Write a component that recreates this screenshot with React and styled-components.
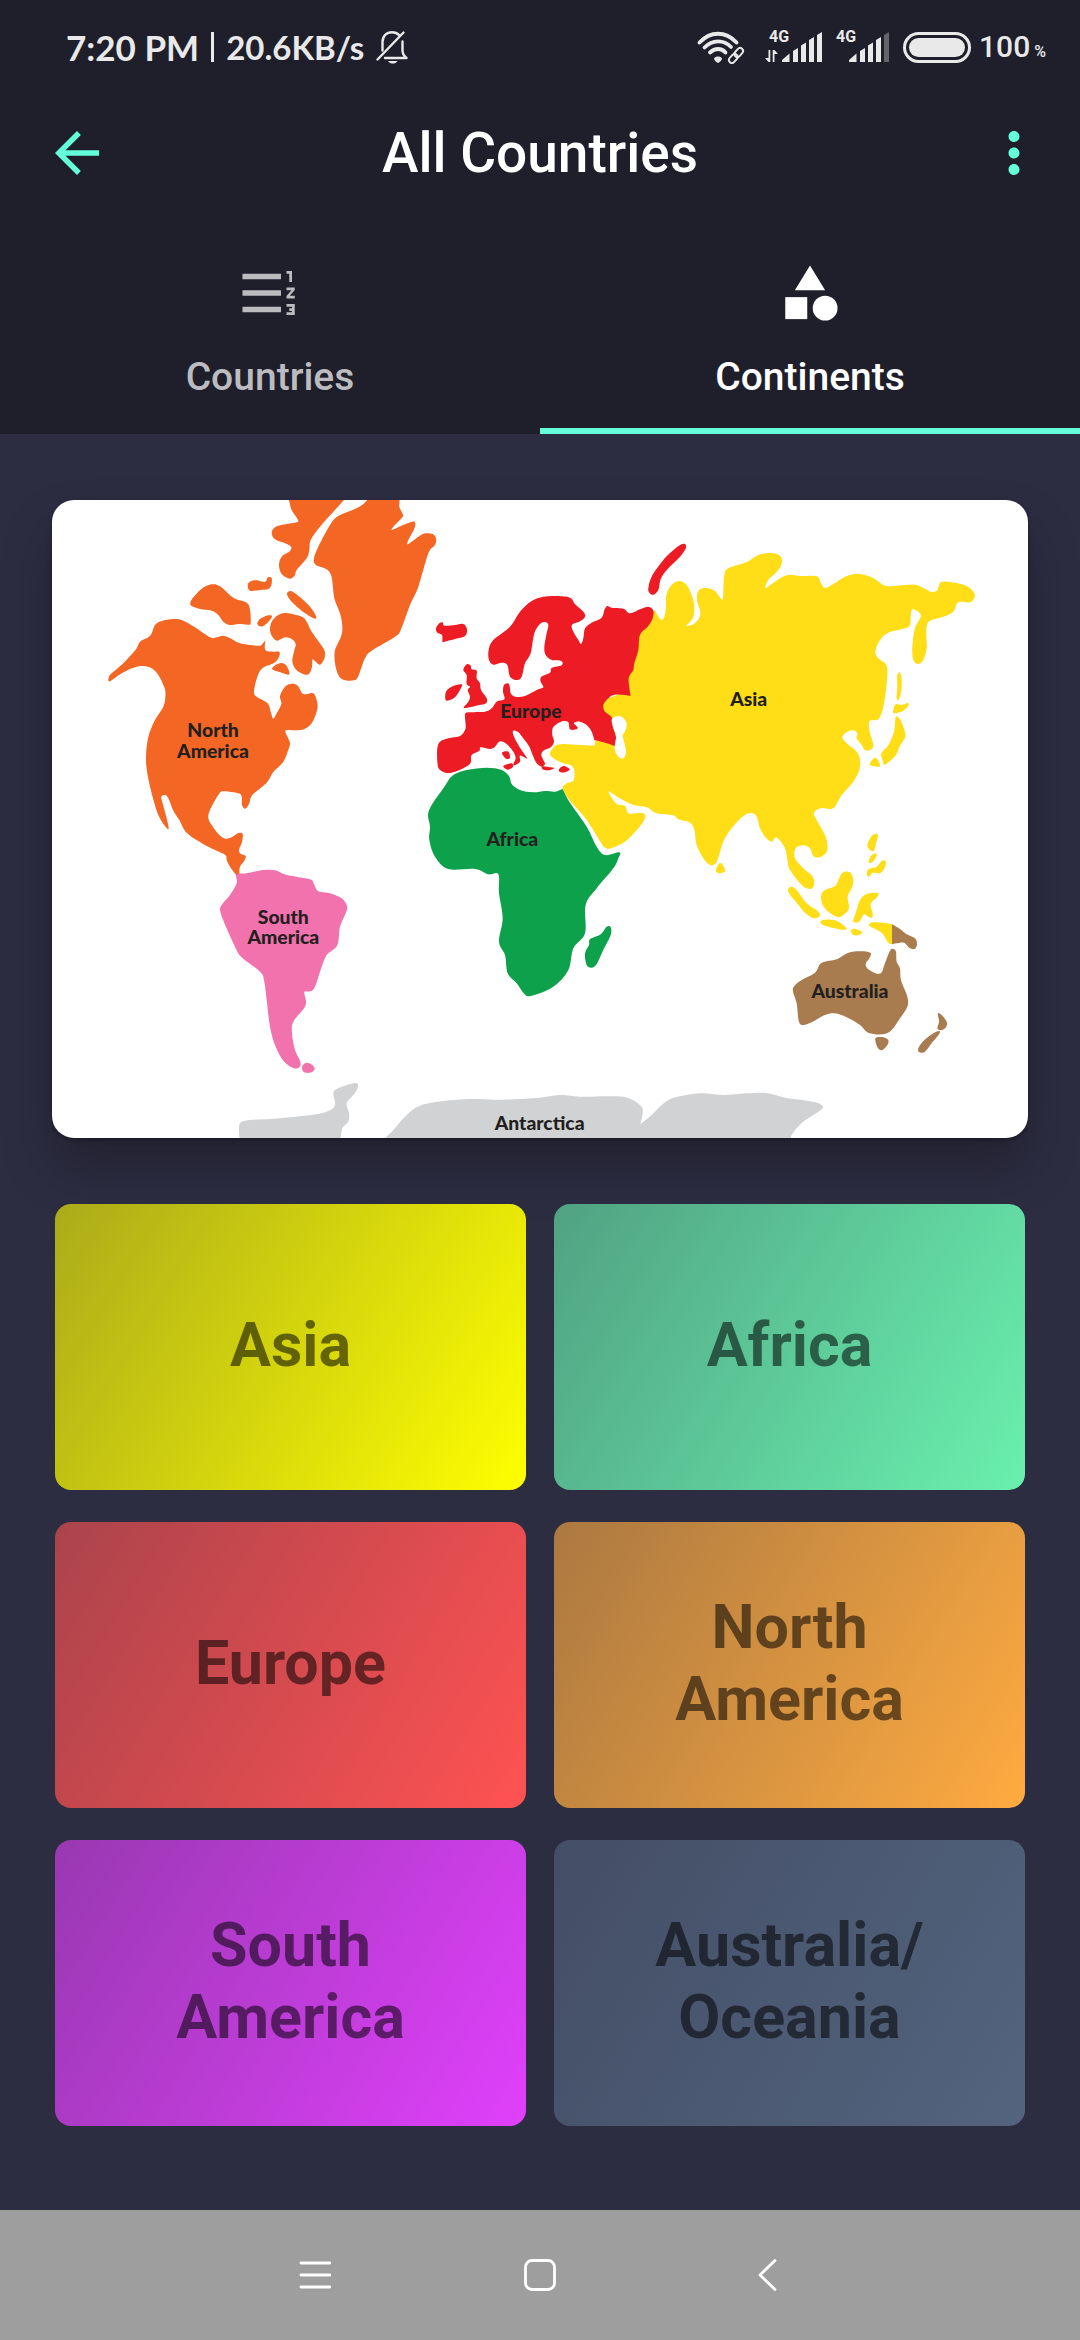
import React from "react";
import styled, { createGlobalStyle } from "styled-components";
import { MdArrowBack, MdMoreVert, MdFormatListNumberedRtl, MdCategory } from "react-icons/md";

const GlobalStyle = createGlobalStyle`
  *, *::before, *::after { box-sizing: border-box; }
  body { margin: 0; background: #2d2d42; font-family: Roboto, "Noto Sans", sans-serif; }
  button { border: 0; padding: 0; margin: 0; background: none; font: inherit; color: inherit; cursor: pointer; }
  svg { display: block; }
`;

const Screen = styled.div`
  min-height: 100vh;
  display: flex;
  flex-direction: column;
`;

/* ---------- header ---------- */

const Header = styled.header`
  background: #1f1e2b;
  color: #fff;
`;

const StatusBar = styled.div`
  height: 76px;
  padding: 18px 34px 0 66px;
  display: flex;
  justify-content: space-between;
  align-items: center;
  color: #e9e9ea;
`;

const StatusGroup = styled.div`
  display: flex;
  align-items: center;
  gap: ${(p) => p.$gap}px;
`;

const StatusText = styled.span`
  font-family: Lato, sans-serif;
  font-weight: 700;
  font-size: ${(p) => p.$size}px;
  line-height: 40px;
  white-space: pre;
`;

const Rule = styled.span`
  width: 3px;
  height: 30px;
  background: currentColor;
`;

const Charge = styled.span`
  display: flex;
  align-items: baseline;
  gap: 4px;
  font-weight: 500;
  font-size: 30px;
  line-height: 40px;
`;

const Percent = styled.span`
  font-size: 16px;
  line-height: 20px;
`;

const AppBar = styled.div`
  height: 154px;
  display: grid;
  grid-template-columns: 1fr auto 1fr;
  align-items: center;
`;

const Title = styled.h1`
  margin: 0;
  font-size: 55px;
  line-height: 66px;
  font-weight: 500;
`;

const BarButton = styled.button`
  width: ${(p) => p.$width}px;
  height: 154px;
  display: grid;
  place-items: center;
  color: #64ffda;
  justify-self: ${(p) => p.$side};
`;

const Tabs = styled.div`
  display: grid;
  grid-template-columns: 1fr 1fr;
`;

const Tab = styled.button`
  display: flex;
  flex-direction: column;
  align-items: center;
  gap: 28px;
  padding: 30px 0 28px;
  border-bottom: 6px solid ${(p) => (p.$active ? "#64ffda" : "transparent")};
  color: ${(p) => (p.$active ? "#fff" : "#bcbcc0")};
  font-size: 39px;
  line-height: 46px;
  font-weight: 500;
`;

/* ---------- content ---------- */

const Content = styled.main`
  flex: 1;
  display: flex;
  flex-direction: column;
  gap: 66px;
  padding: 66px 0 84px;
`;

const MapCard = styled.figure`
  margin: 0 52px;
  border-radius: 22px;
  overflow: hidden;
  background: #fff;
  box-shadow: 0 30px 50px rgba(0, 0, 0, 0.25), 0 2px 4px rgba(0, 0, 0, 0.3);

  svg { width: 100%; height: auto; }
  text {
    font-family: Lato, sans-serif;
    font-weight: 900;
    font-size: 58px;
    text-anchor: middle;
    fill: #231f20;
  }
`;

const Grid = styled.div`
  display: grid;
  grid-template-columns: 1fr 1fr;
  gap: 32px 28px;
  padding: 0 55px;
`;

const Tile = styled.button`
  min-height: 286px;
  padding: 0 88px 4px;
  border-radius: 16px;
  background: linear-gradient(121deg, ${(p) => p.$color}99, ${(p) => p.$color});
  color: rgba(0, 0, 0, 0.54);
  font-size: 61px;
  line-height: 72px;
  font-weight: 700;
`;

/* ---------- system navigation ---------- */

const SystemNav = styled.nav`
  height: 130px;
  display: flex;
  justify-content: center;
  background: #9e9e9e;
`;

const NavButton = styled.button`
  width: 225px;
  display: grid;
  place-items: center;
`;

/* ---------- map drawing ---------- */

// Turns a list of "x,y" points into a closed smooth curve.
// A point written twice makes a sharp corner.
function smooth(list) {
  const p = list.trim().split(/\s+/).map((s) => s.split(",").map(Number));
  const n = p.length;
  let d = `M${p[0][0]} ${p[0][1]}`;
  for (let i = 0; i < n; i++) {
    const a = p[(i + n - 1) % n];
    const b = p[i];
    const c = p[(i + 1) % n];
    const e = p[(i + 2) % n];
    if (b[0] === c[0] && b[1] === c[1]) continue;
    const x1 = b[0] + (c[0] - a[0]) / 6;
    const y1 = b[1] + (c[1] - a[1]) / 6;
    const x2 = c[0] - (e[0] - b[0]) / 6;
    const y2 = c[1] - (e[1] - b[1]) / 6;
    d += `C${x1.toFixed(1)} ${y1.toFixed(1)} ${x2.toFixed(1)} ${y2.toFixed(1)} ${c[0]} ${c[1]}`;
  }
  return d + "Z";
}

const NORTH_AMERICA = [
  "205,570 207,560 215,550 245,524 262,507 288,478 300,455 325,442 335,430 345,405 365,393 400,387 430,392 465,412 510,442 530,442 550,437 575,447 600,460 650,467 664,465 676,451 676,451 676,480 700,485 718,486 717,500 703,518 668,534 652,560 642,605 650,620 683,640 692,665 700,686 710,670 724,642 720,618 735,590 755,581 773,587 790,612 820,610 832,640 830,665 815,700 795,716 770,721 740,720 737,728 749,755 748,770 730,815 700,846 680,878 637,915 628,940 616,956 606,945 605,920 595,910 550,904 535,915 510,960 505,985 515,1005 535,1032 555,1046 575,1042 595,1029 608,1032 606,1055 597,1080 603,1092 617,1098 613,1112 600,1130 597,1156 590,1156 570,1130 560,1110 556,1095 520,1078 475,1053 437,1025 418,990 400,962 385,925 375,915 364,920 368,940 380,985 386,1015 378,1012 355,975 335,910 322,850 318,800 325,740 345,690 370,650 376,620 374,595 355,555 335,535 310,528 280,533 245,550 212,573",
  "451,338 460,322 485,296 515,283 540,289 580,323 620,338 630,360 632,398 625,404 595,402 570,405 550,395 535,375 515,362 480,357 455,348",
  "623,285 632,274 650,271 675,276 684,262 695,265 694,285 685,297 660,300 630,302",
  "652,400 660,387 680,377 696,378 688,392 670,408 657,408",
  "742,308 755,304 780,322 810,350 828,378 826,386 815,382 785,362 755,335 743,318",
  "690,420 695,395 715,375 740,369 785,380 800,395 815,425 850,475 855,495 850,512 840,524 830,518 818,508 816,530 808,550 795,554 770,541 757,515 762,485 767,462 755,447 735,442 712,452 697,440",
  "697,538 707,525 725,519 740,528 748,553 725,548",
  "745,10 747,30 755,60 773,88 770,97 725,105 705,112 695,128 705,148 735,160 753,170 750,183 725,200 717,225 725,252 750,266 765,255 770,240 800,205 808,180 812,150 840,110 880,65 910,32 925,10",
  "1000,10 980,32 955,52 895,78 870,105 835,170 822,205 827,224 860,238 875,262 883,325 900,370 907,410 903,440 885,480 885,520 895,555 912,570 942,571 955,558 975,505 995,482 1065,440 1082,420 1110,345 1135,290 1165,190 1185,165 1188,145 1178,132 1155,130 1135,140 1105,162 1103,155 1122,118 1126,100 1117,95 1090,105 1057,119 1060,110 1088,80 1086,68 1078,50 1079,30 1080,10",
];

const ASIA = [
  "42,272 50,282 63,299 73,290 78,260 78,230 90,200 115,183 140,195 158,235 163,265 158,295 137,319 137,319 160,313 177,295 181,275 173,250 171,225 180,208 200,204 225,213 247,239 250,210 253,165 265,145 320,126 355,105 395,99 420,107 426,125 415,150 385,180 376,205 395,192 440,166 480,168 530,169 543,190 555,204 580,192 620,168 655,162 695,172 735,197 770,197 825,194 850,204 875,216 892,210 902,187 930,186 975,196 1000,215 1004,230 990,247 955,247 940,275 910,290 870,302 860,320 859,350 860,385 850,420 835,432 820,420 817,380 825,325 842,290 835,275 817,268 812,290 810,315 795,325 745,338 720,360 706,395 715,415 740,438 740,490 730,560 715,598 690,602 688,630 700,675 690,690 675,690 665,675 650,655 652,640 640,631 620,637 607,652 620,670 650,695 660,720 658,750 640,785 605,825 580,865 545,864 522,878 530,900 555,945 562,975 560,995 540,1012 520,1008 510,985 490,976 467,985 465,1015 490,1045 518,1070 522,1095 510,1107 485,1095 450,1050 442,1020 435,985 410,952 395,965 375,950 360,925 350,890 335,879 310,888 275,925 250,965 230,1025 210,1035 190,1015 170,975 163,930 150,908 115,898 100,886 50,880 20,862 -20,855 -60,835 -95,812 -95,812 -90,825 -70,852 -45,858 -35,880 -15,880 10,880 15,895 -5,925 -45,965 -95,987 -110,980 -160,900 -210,842 -232,807 -220,790 -200,782 -197,755 -205,737 -230,730 -260,715 -270,700 -255,678 -230,672 -180,675 -137,677 -137,677 -130,650 -115,600 -120,550 -40,510 -35,470 -15,410 -10,350 20,310",
  "228,1050 238,1030 248,1035 256,1052 245,1059 232,1058",
  "772,465 780,458 785,480 784,510 777,538 770,535 772,500",
  "762,580 760,570 767,553 785,555 803,549 805,556 790,572",
  "767,592 778,595 790,620 796,650 778,680 768,705 735,734 728,720 724,700 745,675 762,635",
  "690,735 695,722 707,713 718,728 718,740",
];

const EAST_INDIES = [
  "502,195 515,168 528,161 534,168 528,190 522,212 510,210",
  "506,246 512,228 528,220 528,232 515,248",
  "501,285 505,268 530,260 545,243 557,243 555,262 540,280 518,278 508,290",
  "264,328 275,320 290,330 320,370 355,395 358,410 338,414 312,395 290,368 270,345",
  "363,350 372,332 405,318 415,300 428,278 450,277 460,300 455,325 443,350 447,385 430,405 412,411 385,395 368,375",
  "361,425 375,419 405,421 425,432 440,446 425,449 375,437",
  "453,452 465,446 486,456 478,465 460,465",
  "460,420 470,390 480,360 500,342 533,339 532,350 512,372 518,400 516,413 505,410 492,403 478,425 462,427",
  "507,433 520,427 550,428 577,433 577,433 577,493 577,493 565,488 545,458 512,440",
];

const EUROPE = [
  "112,775 120,755 145,745 180,738 195,720 197,705 195,675 205,667 255,665 275,655 290,635 313,628 309,605 312,585 325,580 330,595 332,610 345,620 375,618 410,600 430,592 422,575 424,560 450,548 455,534 485,526 484,513 455,510 437,495 433,470 440,430 445,405 435,396 420,402 403,430 392,490 375,520 365,560 350,570 330,560 322,525 305,518 280,524 267,510 266,480 280,450 330,410 360,365 395,333 430,320 470,318 510,323 525,342 550,365 555,380 540,394 516,405 520,425 535,450 543,462 550,445 555,415 575,398 605,383 613,360 622,348 635,353 670,356 690,370 720,358 745,350 760,362 758,385 745,408 720,435 715,480 703,520 700,540 687,560 687,585 692,618 692,618 645,614 625,625 610,645 615,665 635,682 640,715 648,740 645,768 645,768 615,758 583,750 583,750 575,725 560,705 540,695 522,699 533,712 528,718 510,718 505,697 490,693 470,702 458,715 457,735 462,755 452,772 430,782 424,795 430,810 435,822 425,830 410,820 398,795 388,770 372,748 355,727 340,722 340,735 355,765 375,795 381,806 360,797 360,815 345,826 340,822 347,805 340,785 320,762 300,754 285,770 270,777 242,772 238,782 215,795 212,818 195,832 165,845 140,849 118,838 112,815",
  "108,415 118,400 128,397 133,407 165,405 190,402 201,418 195,438 165,447 127,457 127,457 126,435 112,428",
  "190,540 200,523 212,527 215,538 230,542 230,565 240,580 243,600 260,625 258,640 235,646 192,654 205,635 210,620 203,600 210,590 200,582 200,555",
  "137,630 138,605 155,590 185,583 180,600 165,622 150,630",
  "745,295 755,260 790,210 830,172 852,161 858,173 840,200 805,235 783,265 775,300 760,314 748,308",
  "306,788 325,785 330,803 318,806",
  "310,828 335,820 338,832 322,839",
  "426,829 440,830 463,834 445,841 428,838",
  "477,838 490,828 509,838 495,847 480,846",
];

const CASPIAN_SEA =
  "635,690 645,680 665,680 680,700 675,725 668,735 672,755 678,785 672,803 660,804 648,790 644,770 648,740 640,715";

const AFRICA = [
  "157,857 200,840 260,833 305,840 328,860 335,882 360,900 400,907 435,903 465,905 488,897 488,897 508,935 560,1010 590,1070 615,1095 658,1087 655,1105 640,1135 590,1195 557,1245 555,1330 520,1375 505,1440 460,1490 395,1517 373,1512 350,1480 323,1450 315,1395 297,1355 308,1285 297,1210 295,1153 265,1153 225,1137 145,1137 105,1100 88,1050 90,1010 84,975 95,945 130,895",
  "632,1312 632,1335 610,1380 590,1422 575,1433 560,1425 555,1390 567,1365 570,1348 602,1333 620,1310",
];

const SOUTH_AMERICA = [
  "170,163 200,160 250,150 285,151 320,165 390,178 402,193 415,214 450,220 485,235 501,258 497,280 480,320 475,365 465,385 440,405 425,440 405,500 390,514 373,516 378,545 372,565 340,605 336,640 345,690 361,725 358,742 340,744 310,722 285,675 270,620 260,540 252,480 240,455 185,412 165,380 140,325 121,275 125,255 150,225 170,190",
  "366,742 375,730 392,731 404,745 395,757 372,757",
];

const ANTARCTICA = [
  "180,970 180,970 177,925 185,905 220,899 280,896 400,884 445,873 465,855 460,820 475,805 525,789 534,800 520,825 500,850 507,880 505,905 487,925 480,970 480,970",
  "600,970 600,970 620,950 640,930 680,885 720,857 790,843 870,837 950,839 1060,835 1140,825 1200,830 1300,829 1350,836 1387,865 1381,913 1381,913 1415,885 1470,838 1560,820 1630,825 1700,820 1760,819 1820,834 1900,845 1928,858 1920,872 1870,905 1835,945 1835,970 1835,970",
];

const AUSTRALIA = [
  "279,635 283,618 305,600 345,578 360,553 380,544 410,538 445,518 485,514 512,519 508,535 497,552 505,568 530,581 545,577 553,555 570,512 580,507 588,515 590,545 600,565 603,600 622,650 622,680 600,715 575,750 548,763 505,758 480,735 440,712 405,700 375,705 335,727 308,735 296,722 290,670",
  "526,775 545,771 563,778 564,792 547,810 533,803",
  "714,700 728,708 741,728 735,745 722,751 712,745 717,725",
  "655,805 670,783 700,760 718,753 717,763 695,790 675,815 658,817",
  "576,433 576,433 600,447 620,463 645,475 651,492 645,506 630,505 612,488 590,490 576,493 576,493",
];

function Land({ shapes, color }) {
  return shapes.map((s) => <path key={s.slice(0, 16)} d={smooth(s)} fill={color} />);
}

function WorldMap() {
  return (
    <svg viewBox="0 0 2928 1914" role="img" aria-label="Map of the continents">
      <g transform="translate(-36 -30)">
        <Land shapes={NORTH_AMERICA} color="#f36623" />
        <text x="519" y="742">North</text>
        <text x="519" y="803">America</text>
      </g>
      <g transform="translate(1764 60)">
        <Land shapes={ASIA} color="#ffde17" />
        <text x="326" y="557">Asia</text>
      </g>
      <g transform="translate(1044 -30)">
        <Land shapes={AFRICA} color="#0ea14b" />
        <Land shapes={EUROPE} color="#ed1c24" />
        <path d={smooth(CASPIAN_SEA)} fill="#fff" />
        <path d="M509 932 L562 1010 L592 1070 L616 1094 L625 1078 L610 1070 L560 990 Z" fill="#fff" />
        <text x="393" y="685">Europe</text>
        <text x="337" y="1067">Africa</text>
      </g>
      <g transform="translate(384 960)">
        <Land shapes={SOUTH_AMERICA} color="#f172ac" />
        <Land shapes={ANTARCTICA} color="#d1d2d4" />
        <text x="310" y="311">South</text>
        <text x="310" y="373">America</text>
        <text x="1079" y="930">Antarctica</text>
      </g>
      <g transform="translate(1944 840)">
        <Land shapes={EAST_INDIES} color="#ffde17" />
        <Land shapes={AUSTRALIA} color="#a87c4f" />
        <text x="450" y="655">Australia</text>
      </g>
    </svg>
  );
}

/* ---------- status icons ---------- */

function BellOff() {
  return (
    <svg width="32" height="34" viewBox="0 0 32 34" fill="none" stroke="currentColor" strokeWidth="2.4" strokeLinecap="round" strokeLinejoin="round">
      <path d="M6.5 20.5V12C6.5 6 10.5 2.3 16 2.3c3 0 5.4 1 7.2 2.9M26.500 11.500V20.500c0 3 1.500 5.500 4 7.500H9" />
      <path d="M1.500 29.500L27.500 2.500" />
      <path d="M12 31h9.500c-1.200 2-3 2.600-4.700 2.600S13.200 33 12 31z" fill="currentColor" stroke="none" />
    </svg>
  );
}

function Wifi() {
  return (
    <svg width="54" height="34" viewBox="0 0 54 34" fill="none" stroke="currentColor" strokeWidth="3.8" strokeLinecap="round">
      <path d="M2.500 12.500C13.500 0.800 28.500 0.800 39.500 12.500" />
      <path d="M7.500 17.500C15.500 9.500 26.500 9.500 34 17" />
      <path d="M13 22.500C18 17.800 24.500 17.800 28.500 22.500" />
      <path d="M21 33c-2.500-1.500-4-3.200-4-4.800 2-2.200 6-2.200 8 0 0 1.600-1.500 3.300-4 4.800z" fill="currentColor" stroke="none" />
      <g strokeWidth="1.9" transform="rotate(-48 39 25.500)">
        <rect x="30" y="22.500" width="10" height="6" rx="3" />
        <rect x="38" y="22.500" width="10" height="6" rx="3" />
      </g>
    </svg>
  );
}

const BAR_TOPS = [18, 12.5, 7, 2];

function Signal({ level, data }) {
  const left = data ? 17 : 13;
  const width = left + 40;
  return (
    <svg width={width} height="46" viewBox={`0 -6 ${width} 46`} fill="currentColor">
      <text x={data ? 4 : 0} y="12" fontFamily="Roboto, sans-serif" fontWeight="700" fontSize="16">4G</text>
      {data && <path d="M3.500 20h1.800v12H3.500L0 28h3.500zM9.500 32H7.700V20h1.800L13 24H9.500z" />}
      <path d={`M${left} 32v-2l7.500-6.500V32z`} />
      {BAR_TOPS.map((top, i) => {
        const x = left + 11 + i * 8;
        return <path key={top} opacity={i + 2 > level ? 0.35 : 1} d={`M${x} 32V${top + 3}l5-3V32z`} />;
      })}
    </svg>
  );
}

function Battery() {
  return (
    <svg width="68" height="31" viewBox="0 0 68 31" fill="none">
      <rect x="1.500" y="1.500" width="65" height="28" rx="14" stroke="currentColor" strokeWidth="3" />
      <rect x="6" y="6" width="56" height="19" rx="9.500" fill="currentColor" />
    </svg>
  );
}

/* ---------- page ---------- */

const CONTINENTS = [
  { name: "Asia", color: "#ffff00" },
  { name: "Africa", color: "#69f0ae" },
  { name: "Europe", color: "#ff5252" },
  { name: "North America", color: "#ffab40" },
  { name: "South America", color: "#e040fb" },
  { name: "Australia/ Oceania", color: "#53647e" },
];

export default function App() {
  return (
    <Screen>
      <GlobalStyle />
      <Header>
        <StatusBar>
          <StatusGroup $gap={12}>
            <StatusText $size={35}>7:20 PM</StatusText>
            <Rule />
            <StatusText $size={33}>20.6KB/s</StatusText>
            <BellOff />
          </StatusGroup>
          <StatusGroup $gap={14}>
            <Wifi />
            <Signal level={5} data />
            <Signal level={4} />
            <StatusGroup $gap={8}>
              <Battery />
              <Charge>
                100<Percent>%</Percent>
              </Charge>
            </StatusGroup>
          </StatusGroup>
        </StatusBar>
        <AppBar>
          <BarButton $width={154} $side="start" aria-label="Back">
            <MdArrowBack size={66} />
          </BarButton>
          <Title>All Countries</Title>
          <BarButton $width={132} $side="end" aria-label="More options">
            <MdMoreVert size={66} />
          </BarButton>
        </AppBar>
        <Tabs role="tablist">
          <Tab role="tab" aria-selected="false">
            <MdFormatListNumberedRtl size={66} />
            Countries
          </Tab>
          <Tab role="tab" aria-selected="true" $active>
            <MdCategory size={66} />
            Continents
          </Tab>
        </Tabs>
      </Header>

      <Content>
        <MapCard>
          <WorldMap />
        </MapCard>
        <Grid>
          {CONTINENTS.map((c) => (
            <Tile key={c.name} $color={c.color}>{c.name}</Tile>
          ))}
        </Grid>
      </Content>

      <SystemNav>
        <NavButton aria-label="Recent apps">
          <svg width="32" height="32" viewBox="0 0 32 32" stroke="#fff" strokeWidth="2.8" strokeLinecap="round">
            <path d="M2 4h29M2 16h29M2 28h29" />
          </svg>
        </NavButton>
        <NavButton aria-label="Home">
          <svg width="32" height="32" viewBox="0 0 32 32" fill="none" stroke="#fff" strokeWidth="2.8">
            <rect x="1.500" y="1.500" width="29" height="29" rx="6.500" />
          </svg>
        </NavButton>
        <NavButton aria-label="Back">
          <svg width="32" height="32" viewBox="0 0 32 32" fill="none" stroke="#fff" strokeWidth="2.8" strokeLinecap="round" strokeLinejoin="round">
            <path d="M26 1.500L11 16l15 14.500" />
          </svg>
        </NavButton>
      </SystemNav>
    </Screen>
  );
}
